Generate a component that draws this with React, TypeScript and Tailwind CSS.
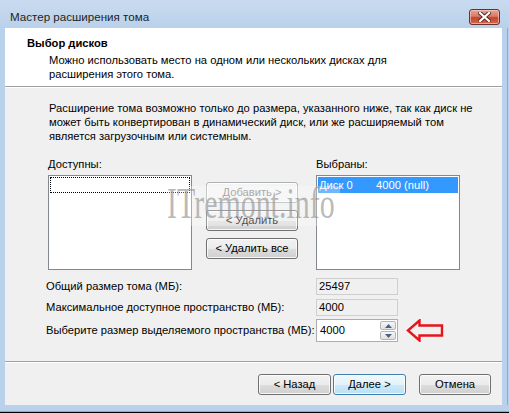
import React from "react";

const btnBase =
  "h-[21px] rounded-[3px] border text-[11.2px] leading-[15px] flex items-center justify-center shadow-[inset_0_0_0_1px_rgba(255,255,255,0.8)]";
const btnNormal =
  "border-[#707070] text-black bg-[linear-gradient(#f2f2f2_0%,#ebebeb_50%,#dddddd_51%,#cfcfcf_100%)]";
const btnDisabled = "border-[#adb2b5] text-[#838383] bg-[#f4f4f4]";
const btnDefault =
  "border-[#3c7fb1] text-black bg-[linear-gradient(#f0f8fd_0%,#e3f2fb_50%,#cde9f9_51%,#bde0f5_100%)] shadow-[inset_0_0_0_1px_#c7ecfc]";

function Spin() {
  return (
    <div className="flex flex-col gap-px mr-[1px]">
      <div className="w-[16px] h-[9px] rounded-[2px] border border-[#b5b5b5] bg-[linear-gradient(#f6f6f6,#e0e0e0)] flex items-center justify-center">
        <svg width="7" height="4" viewBox="0 0 7 4">
          <path d="M0 4 L3.5 0 L7 4 Z" fill="#4d6185" />
        </svg>
      </div>
      <div className="w-[16px] h-[9px] rounded-[2px] border border-[#b5b5b5] bg-[linear-gradient(#f6f6f6,#e0e0e0)] flex items-center justify-center">
        <svg width="7" height="4" viewBox="0 0 7 4">
          <path d="M0 0 L3.5 4 L7 0 Z" fill="#4d6185" />
        </svg>
      </div>
    </div>
  );
}

export default function App() {
  return (
    <div className="relative w-[509px] h-[413px] overflow-hidden flex flex-col bg-[#b9d1ea] font-['Liberation_Sans',Arial,sans-serif] text-[11.2px] leading-[15px] text-black">
      {/* Title bar */}
      <div className="h-[28px] flex items-start bg-[linear-gradient(#c9dbf0,#b9d1ea)]">
        <div className="pl-[10px] pt-[9px] text-[#1e1e1e] text-[11.6px]">
          Мастер расширения тома
        </div>
        <div className="ml-auto mt-[9px] mr-[9px] w-[31px] h-[16px] rounded-[3px] border border-[#6d2f2a] bg-[linear-gradient(#e8a493_0%,#d67a68_45%,#c4432c_55%,#d26a4e_100%)] shadow-[inset_0_0_0_1px_rgba(255,210,200,0.6)] flex items-center justify-center">
          <svg width="13" height="10" viewBox="0 0 13 10">
            <path
              d="M2 1 L11 9 M11 1 L2 9"
              stroke="#5a2a24"
              strokeWidth="4"
              strokeLinecap="square"
            />
            <path
              d="M2 1 L11 9 M11 1 L2 9"
              stroke="#ffffff"
              strokeWidth="2.2"
              strokeLinecap="square"
            />
          </svg>
        </div>
      </div>

      {/* Middle */}
      <div className="flex h-[377px]">
        <div className="ml-[5px] w-[497px] flex flex-col bg-[#f0f0f0]">
          {/* Header */}
          <div className="h-[58px] bg-white pt-[8px]">
            <div className="pl-[22px] font-bold">Выбор дисков</div>
            <div className="pl-[44px] mt-[2px] leading-[14px]">
              <div>Можно использовать место на одном или нескольких дисках для</div>
              <div>расширения этого тома.</div>
            </div>
          </div>
          <div className="h-px bg-[#a0a0a0]" />
          <div className="h-px bg-white" />

          {/* Body */}
          <div className="flex-1 flex flex-col">
            <div className="ml-[44px] mt-[13px] leading-[14px] whitespace-nowrap">
              <div>Расширение тома возможно только до размера, указанного ниже, так как диск не</div>
              <div>может быть конвертирован в динамический диск, или же расширяемый том</div>
              <div>является загрузочным или системным.</div>
            </div>

            <div className="ml-[43px] mt-[14px] flex items-start">
              <div className="w-[144px]">
                <div>Доступны:</div>
                <div className="mt-[3px] h-[95px] border border-[#828790] bg-white p-px">
                  <div className="h-[16px] border border-dotted border-black" />
                </div>
              </div>
              <div className="ml-[14px] w-[92px] pt-[25px] flex flex-col">
                <div className={`${btnBase} ${btnDisabled}`}>Добавить &gt;</div>
                <div className={`${btnBase} ${btnNormal} mt-[7px]`}>&lt; Удалить</div>
                <div className={`${btnBase} ${btnNormal} mt-[7px]`}>&lt; Удалить все</div>
              </div>
              <div className="ml-[18px] w-[144px]">
                <div>Выбраны:</div>
                <div className="mt-[3px] h-[95px] border border-[#828790] bg-white p-px">
                  <div className="h-[16px] bg-[#3399ff] text-white flex items-center pl-px whitespace-nowrap">
                    <span className="w-[57px]">Диск 0</span>
                    <span>4000 (null)</span>
                  </div>
                </div>
              </div>
            </div>

            {/* Fields */}
            <div className="ml-[41px] mt-[8px] flex items-center h-[17px] whitespace-nowrap">
              <div className="w-[270px]">Общий размер тома (МБ):</div>
              <div className="w-[82px] h-[17px] border border-[#cfcfcf] bg-[#f0f0f0] pl-[2px] leading-[15px]">
                25497
              </div>
            </div>
            <div className="ml-[41px] mt-[4px] flex items-center h-[17px] whitespace-nowrap">
              <div className="w-[270px]">Максимальное доступное пространство (МБ):</div>
              <div className="w-[82px] h-[17px] border border-[#cfcfcf] bg-[#f0f0f0] pl-[2px] leading-[15px]">
                4000
              </div>
            </div>
            <div className="ml-[41px] mt-[3px] flex items-center h-[23px] whitespace-nowrap">
              <div className="w-[270px]">Выберите размер выделяемого пространства (МБ):</div>
              <div className="w-[82px] h-[23px] border border-[#abadb3] bg-white flex items-center justify-between pl-[3px]">
                <span>4000</span>
                <Spin />
              </div>
              <svg className="ml-[8px]" width="38" height="23" viewBox="0 0 38 23">
                <path
                  d="M2 11.5 L13.5 1.5 L13.5 6.5 L36 6.5 L36 16.5 L13.5 16.5 L13.5 21.5 Z"
                  fill="none"
                  stroke="#e8141c"
                  strokeWidth="2.4"
                  strokeLinejoin="miter"
                />
              </svg>
            </div>

            <div className="mt-[19px] h-px bg-[#a0a0a0]" />
            <div className="h-px bg-white" />

            <div className="mt-[11px] flex pl-[253px]">
              <div className={`${btnBase} ${btnNormal} w-[73px]`}>&lt; Назад</div>
              <div className={`${btnBase} ${btnDefault} w-[73px] ml-[2px]`}>Далее &gt;</div>
              <div className={`${btnBase} ${btnNormal} w-[72px] ml-[13px]`}>Отмена</div>
            </div>
          </div>
        </div>
        <div className="ml-[5px] w-px bg-[#3ecbf2]" />
      </div>

      {/* Bottom frame */}
      <div className="h-[6px]" />
      <div className="h-px bg-[#3ecbf2]" />
      <div className="h-px bg-black" />

      {/* Watermark */}
      <div className="absolute left-[166px] top-[186px] w-[174px] h-[40px] bg-white/30 pointer-events-none" />
      <div className="absolute left-[167px] top-[178px] origin-left scale-x-[0.68] whitespace-nowrap font-['Liberation_Serif',serif] text-[44px] leading-[52px] text-[#8c8c8c]/60 pointer-events-none">
        ITremont.info
      </div>
    </div>
  );
}
